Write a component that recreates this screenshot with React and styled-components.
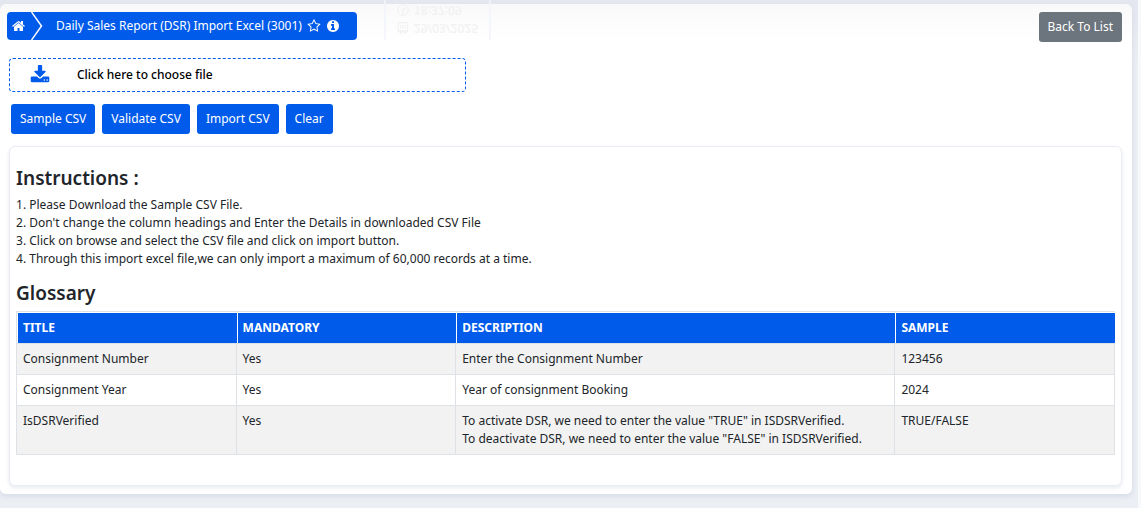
import styled, { createGlobalStyle } from 'styled-components'
import { FaRegClock, FaRegCalendarAlt } from 'react-icons/fa'

const GlobalStyle = createGlobalStyle`
  * {
    box-sizing: border-box;
  }
  body {
    margin: 0;
    min-height: 100vh;
    background: #ebeef3;
    border-right: 3px solid #f8f9fb;
    color: #212529;
    font-family: "Noto Sans", "Open Sans", sans-serif;
    font-size: 12px;
    line-height: 18px;
  }
  button, input {
    font: inherit;
  }
`;

const Page = styled.div`
  padding: 4px 6px 14px 0;
  background: linear-gradient(#e4e7ef, #ebeef3 60px);
`;

const Panel = styled.main`
  padding: 8px 10px 8px 7px;
  border-radius: 6px;
  background: linear-gradient(#f9f9f9, #fff 36px);
  box-shadow: 0 2px 4px 1px #dadeea;
`;

const TopBar = styled.header`
  position: relative;
  display: flex;
  justify-content: space-between;
  align-items: flex-start;
`;

const Breadcrumb = styled.nav`
  display: flex;
  align-items: center;
  height: 28px;
  padding-right: 17px;
  border-radius: 4px;
  background: #005beb;
  color: #fff;
`;

const Glyph = styled.svg`
  flex: none;
  width: ${({ $size }) => $size}px;
  height: ${({ $size }) => $size}px;
  fill: currentColor;
`;

const HomeLink = styled.a`
  display: flex;
  padding: 0 5px;
  color: inherit;
`;

const Arrow = styled.svg`
  width: 12px;
  height: 28px;
  margin-right: 13px;
`;

const IconButton = styled.button`
  display: flex;
  margin-left: 5px;
  padding: 0;
  border: 0;
  background: none;
  color: inherit;
  cursor: pointer;
`;

const Reflection = styled.div`
  position: absolute;
  top: -12px;
  left: 377px;
  width: 107px;
  height: 40px;
  padding: 1px 11px;
  border: solid #f2f5fc;
  border-width: 0 2px;
  color: #f0f0f0;
  opacity: 0.8;
`;

const Mirrored = styled.div`
  display: flex;
  align-items: center;
  gap: 5px;
  font-weight: 500;
  transform: scaleY(-1);
`;

const Button = styled.button`
  height: 30px;
  padding: 0 9px;
  border: 0;
  border-radius: 3px;
  background: ${({ $muted }) => ($muted ? '#6c757d' : '#005beb')};
  color: #fff;
  cursor: pointer;
`;

const FilePicker = styled.label`
  display: flex;
  align-items: center;
  gap: 27px;
  width: 41%;
  height: 34px;
  margin: 16px 0 0 2px;
  padding-left: 20px;
  border: 1px dashed #005beb;
  border-radius: 4px;
  color: #000;
  font-weight: 500;
  cursor: pointer;

  svg {
    color: #005beb;
  }
  input {
    display: none;
  }
`;

const Actions = styled.div`
  display: flex;
  gap: 7px;
  margin: 12px 4px;
`;

const Card = styled.section`
  margin-left: 2px;
  padding: 19px 6px 30px;
  border: 1px solid #e9ecf6;
  border-radius: 6px;
  background: #fff;
  box-shadow: 0 2px 4px #e8eaef;
`;

const Heading = styled.h2`
  margin: 0 0 6px;
  font-size: 19px;
  line-height: 24px;
  font-weight: 600;
`;

const Steps = styled.ol`
  margin: 0 0 13px;
  padding: 0;
  list-style: none;
`;

const Table = styled.table`
  width: 100%;
  table-layout: fixed;
  border: solid #dee2e6;
  border-width: 1px 0 0 1px;
  border-spacing: 0;
  text-align: left;

  th {
    padding: 6px 5px;
    border: solid #fff;
    border-width: 1px 0 0 1px;
    background: #005beb;
    color: #fff;
    font-weight: 700;
  }
  td {
    padding: 6px;
    border: solid #dee2e6;
    border-width: 0 1px 1px 0;
    vertical-align: top;
  }
  tbody tr:first-child td {
    border-top-width: 1px;
  }
  tbody tr:nth-child(odd) {
    background: #f2f2f2;
  }
`;

const Col = styled.col`
  width: ${({ $width }) => $width};
`;

const icons = {
  home: 'M1408 992v480q0 26-19 45t-45 19h-384v-384h-256v384h-384q-26 0-45-19t-19-45v-480q0-1 .5-3t.5-3l575-474 575 474q1 2 1 6zm223-69l-62 74q-8 9-21 11h-3q-13 0-21-7l-692-577-692 577q-12 8-24 7-13-2-21-11l-62-74q-8-10-7-23.5t11-21.5l719-599q32-26 76-26t76 26l244 204v-195q0-14 9-23t23-9h192q14 0 23 9t9 23v408l219 182q10 8 11 21.5t-7 23.5z',
  star: 'M1201 1004l306-297-422-62-189-382-189 382-422 62 306 297-73 421 378-199 377 199zm527-357q0 22-26 48l-363 354 86 500q1 7 1 20 0 50-41 50-19 0-40-12l-449-236-449 236q-22 12-40 12-21 0-31.5-14.5t-10.5-35.5q0-6 2-20l86-500-364-354q-25-27-25-48 0-37 56-46l502-73 225-455q19-41 49-41t49 41l225 455 502 73q56 9 56 46z',
  info: 'M1152 1376v-160q0-14-9-23t-23-9h-96v-512q0-14-9-23t-23-9h-320q-14 0-23 9t-9 23v160q0 14 9 23t23 9h96v320h-96q-14 0-23 9t-9 23v160q0 14 9 23t23 9h448q14 0 23-9t9-23zm-128-896v-160q0-14-9-23t-23-9h-192q-14 0-23 9t-9 23v160q0 14 9 23t23 9h192q14 0 23-9t9-23zm640 416q0 209-103 385.5t-279.5 279.5-385.5 103-385.5-103-279.5-279.5-103-385.5 103-385.5 279.5-279.5 385.5-103 385.5 103 279.5 279.5 103 385.5z',
  download: 'M1344 1344q0-26-19-45t-45-19-45 19-19 45 19 45 45 19 45-19 19-45zm256 0q0-26-19-45t-45-19-45 19-19 45 19 45 45 19 45-19 19-45zm128-224v320q0 40-28 68t-68 28h-1472q-40 0-68-28t-28-68v-320q0-40 28-68t68-28h465l135 136q58 56 136 56t136-56l136-136h464q40 0 68 28t28 68zm-325-569q17 41-14 70l-448 448q-18 19-45 19t-45-19l-448-448q-31-29-14-70 17-39 59-39h256v-448q0-26 19-45t45-19h256q26 0 45 19t19 45v448h256q42 0 59 39z',
}

const Icon = ({ name, size }) => (
  <Glyph viewBox="0 0 1792 1792" $size={size} aria-hidden="true">
    <path d={icons[name]} />
  </Glyph>
)

const steps = [
  'Please Download the Sample CSV File.',
  "Don't change the column headings and Enter the Details in downloaded CSV File",
  'Click on browse and select the CSV file and click on import button.',
  'Through this import excel file,we can only import a maximum of 60,000 records at a time.',
]

const glossary = [
  { title: 'Consignment Number', mandatory: 'Yes', description: ['Enter the Consignment Number'], sample: '123456' },
  { title: 'Consignment Year', mandatory: 'Yes', description: ['Year of consignment Booking'], sample: '2024' },
  {
    title: 'IsDSRVerified',
    mandatory: 'Yes',
    description: [
      'To activate DSR, we need to enter the value "TRUE" in ISDSRVerified.',
      'To deactivate DSR, we need to enter the value "FALSE" in ISDSRVerified.',
    ],
    sample: 'TRUE/FALSE',
  },
]

export default function App() {
  return (
    <Page>
      <GlobalStyle />
      <Panel>
        <TopBar>
          <Reflection aria-hidden="true">
            <Mirrored><FaRegClock />18:37:09</Mirrored>
            <Mirrored><FaRegCalendarAlt />29/03/2025</Mirrored>
          </Reflection>
          <Breadcrumb>
            <HomeLink href="#" aria-label="Home"><Icon name="home" size={14} /></HomeLink>
            <Arrow viewBox="0 0 12 28" fill="none" stroke="#fff" strokeWidth="1.5">
              <path d="M0.5 0L10.5 14L0.5 28" />
            </Arrow>
            <span>Daily Sales Report (DSR) Import Excel (3001)</span>
            <IconButton aria-label="Favourite"><Icon name="star" size={14} /></IconButton>
            <IconButton aria-label="Info"><Icon name="info" size={14} /></IconButton>
          </Breadcrumb>
          <Button $muted>Back To List</Button>
        </TopBar>
        <FilePicker>
          <Icon name="download" size={20} />
          Click here to choose file
          <input type="file" accept=".csv" />
        </FilePicker>
        <Actions>
          <Button>Sample CSV</Button>
          <Button>Validate CSV</Button>
          <Button>Import CSV</Button>
          <Button>Clear</Button>
        </Actions>
        <Card>
          <Heading>Instructions :</Heading>
          <Steps>
            {steps.map((step, i) => (
              <li key={step}>{i + 1}. {step}</li>
            ))}
          </Steps>
          <Heading>Glossary</Heading>
          <Table>
            <colgroup>
              <Col $width="20%" />
              <Col $width="20%" />
              <Col $width="40%" />
              <Col $width="20%" />
            </colgroup>
            <thead>
              <tr>
                <th>TITLE</th>
                <th>MANDATORY</th>
                <th>DESCRIPTION</th>
                <th>SAMPLE</th>
              </tr>
            </thead>
            <tbody>
              {glossary.map((row) => (
                <tr key={row.title}>
                  <td>{row.title}</td>
                  <td>{row.mandatory}</td>
                  <td>{row.description.map((line) => <div key={line}>{line}</div>)}</td>
                  <td>{row.sample}</td>
                </tr>
              ))}
            </tbody>
          </Table>
        </Card>
      </Panel>
    </Page>
  )
}
